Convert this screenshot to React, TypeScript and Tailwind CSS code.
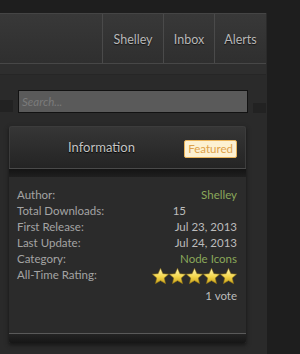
import React from "react"

const rows = [
  { label: "Author:", value: "Shelley", tone: "green" },
  { label: "Total Downloads:", value: "15", tone: "mid" },
  { label: "First Release:", value: "Jul 23, 2013", tone: "plain" },
  { label: "Last Update:", value: "Jul 24, 2013", tone: "plain" },
  { label: "Category:", value: "Node Icons", tone: "green" },
]

function Star() {
  return (
    <svg width="17" height="18" viewBox="1 1 22 21">
      <defs>
        <linearGradient id="sg" x1="0" y1="0" x2="0" y2="1">
          <stop offset="0" stopColor="#fff8b8" />
          <stop offset="0.55" stopColor="#f4d64a" />
          <stop offset="1" stopColor="#c9a21c" />
        </linearGradient>
      </defs>
      <path
        d="M12 1.5l3.1 7 7.4.6-5.6 4.9 1.7 7.4L12 17.5l-6.6 3.9 1.7-7.4-5.6-4.9 7.4-.6z"
        fill="url(#sg)"
        stroke="#8a6d12"
        strokeWidth="0.7"
      />
    </svg>
  )
}

export default function App() {
  return (
    <div
      className="w-[300px] h-[354px] overflow-hidden bg-[#1e1e1e] pt-[13px] text-[11.5px]"
      style={{ fontFamily: 'Lato, "Liberation Sans", sans-serif' }}
    >
      <div className="w-[267px] h-[341px] flex flex-col border-r border-[#2a2a2a]">
        {/* top nav */}
        <div className="h-[50px] flex justify-end bg-gradient-to-b from-[#383838] to-[#2f2f2f] border-t border-[#454545]">
          {[
            { name: "Shelley", w: "w-[61px]" },
            { name: "Inbox", w: "w-[51px]" },
            { name: "Alerts", w: "w-[52px]" },
          ].map((t) => (
            <div
              key={t.name}
              className={`${t.w} flex items-center justify-center pt-[3px] border-l border-[#4a4a4a] text-[12.5px] text-[#b8b8b8] [text-shadow:0_1px_1px_#111]`}
            >
              {t.name}
            </div>
          ))}
        </div>

        {/* sub bar */}
        <div className="h-[12px] bg-[#2e2e2e] border-t border-[#474747] border-b border-b-[#262626]" />

        {/* content */}
        <div className="flex-1 bg-[#2a2a2a] pt-[15px] flex flex-col">
          <div className="flex items-start h-[23px]">
            <div className="w-[13px] h-[12px] mt-[10px] bg-[#222]" />
            <div className="ml-[5px] w-[230px] h-[23px] bg-[#5a5a5a] border border-[#121212] flex items-center px-[3px]">
              <span className="italic text-[11.5px] text-[#7a7a7a]">Search...</span>
            </div>
            <div className="ml-[5px] w-[13px] h-[10px] mt-[13px] bg-[#222]" />
          </div>

          {/* info panel */}
          <div className="ml-[9px] mt-[13px] w-[237px] flex flex-col shadow-[0_2px_4px_#151515]">
            <div className="h-[42px] flex items-center rounded-t-[3px] bg-gradient-to-b from-[#363636] to-[#242424] border border-[#3c3c3c] border-b-0 relative">
              <div className="flex-1 text-center pr-[52px] text-[13px] text-[#c4c4c4] [text-shadow:0_1px_1px_#000]">
                Information
              </div>
              <div className="absolute right-[8px] top-[13px] h-[18px] px-[3px] flex items-center rounded-[2px] bg-[#fdf1d2] border border-[#e9b35a] text-[11.5px] text-[#dea14a]">
                Featured
              </div>
            </div>
            <div className="h-[9px] bg-gradient-to-b from-[#141414] to-[#1f1f1f] border-t border-[#4a4a4a]" />
            <div className="h-[156px] bg-[#2b2b2b] pl-[8px] pr-[9px] pt-[10px] text-[#a4a4a4] leading-[16px]">
              {rows.map((r) => (
                <div key={r.label} className="flex justify-between">
                  <span>{r.label}</span>
                  <span
                    className={
                      r.tone === "green"
                        ? "text-[#8aa85a]"
                        : r.tone === "mid"
                          ? "text-[#bcbcbc] pr-[51px]"
                          : "text-[#bcbcbc]"
                    }
                  >
                    {r.value}
                  </span>
                </div>
              ))}
              <div className="flex justify-between items-center h-[16px]">
                <span>All-Time Rating:</span>
                <div className="flex mt-[1px]">
                  <Star />
                  <Star />
                  <Star />
                  <Star />
                  <Star />
                </div>
              </div>
              <div className="text-right text-[#bcbcbc] mt-[5px]">1 vote</div>
            </div>
            <div className="h-[10px] bg-gradient-to-b from-[#232323] to-[#161616] border-t border-[#5a5a5a] rounded-b-[2px]" />
          </div>
        </div>
      </div>
    </div>
  )
}
